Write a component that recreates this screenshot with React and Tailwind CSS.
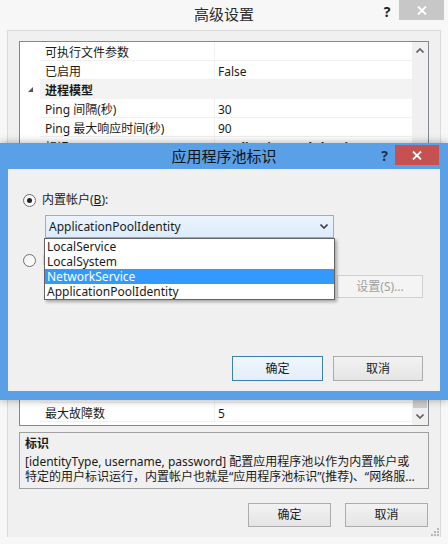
import React from 'react';

const font = "font-['Noto_Sans','Noto_Sans_CJK_SC',sans-serif]";

const rows = [
    { n: '可执行文件参数', v: '' },
    { n: '已启用', v: 'False' },
    { cat: '进程模型' },
    { n: 'Ping 间隔(秒)', v: '30' },
    { n: 'Ping 最大响应时间(秒)', v: '90' },
    { n: '标识', v: 'ApplicationPoolIdentity', bold: true },
    { n: '关闭时间限制(秒)', v: '90' },
    { n: '加载用户配置文件', v: 'True' },
    { n: '启动时间限制(秒)', v: '90' },
    { n: '启用 Ping', v: 'True' },
    { n: '空闲超时(分钟)', v: '20' },
    { n: '空闲超时操作', v: 'Terminate' },
    { n: '最大工作进程数', v: '1' },
    { cat: '快速故障防护' },
    { n: '"服务不可用"响应类型', v: 'HttpLevel' },
    { n: '故障间隔(分钟)', v: '5' },
    { n: '关闭可执行文件', v: '' },
    { n: '关闭可执行文件参数', v: '' },
    { n: '已启用', v: 'True' },
    { n: '最大故障数', v: '5' },
];

const Chevron = ({ up, className }) => (
    <svg width="8" height="5" viewBox="0 0 8 5" className={className}>
        <path d={up ? 'M0.5 4.5 L4 1 L7.5 4.5' : 'M0.5 0.5 L4 4 L7.5 0.5'} fill="none" stroke="currentColor" strokeWidth="1.6" />
    </svg>
);

const Radio = ({ checked }) => (
    <div className="w-[13px] h-[13px] rounded-full border border-[#707070] bg-gradient-to-br from-[#f0f0f0] to-white flex items-center justify-center shrink-0">
        {checked && <div className="w-[5px] h-[5px] rounded-full bg-[#222]" />}
    </div>
);

const WinButton = ({ children, className = '', focused, disabled }) => (
    <div
        className={`flex items-center justify-center border text-[12px] bg-gradient-to-b ${
            focused ? 'border-[#3c7fb1] from-[#f0f7fd] to-[#e3eef9]' : 'border-[#acacac] from-[#f2f2f2] to-[#e5e5e5]'
        } ${disabled ? 'text-[#a0a0a0] border-[#d0d0d0] from-[#f4f4f4] to-[#f4f4f4]' : 'text-[#1a1a1a]'} ${className}`}
    >
        {children}
    </div>
);

const PropRow = ({ row }) => {
    if (row.cat) {
        return (
            <div className="h-[19px] flex items-center shrink-0">
                <div className="w-[20px] h-full flex items-center justify-center">
                    <svg width="5" height="5" viewBox="0 0 5 5"><path d="M5 0 L5 5 L0 5 Z" fill="#555" /></svg>
                </div>
                <div className="flex-1 h-full bg-[#f3f3f3] flex items-center pl-[5px] pt-[3px] font-bold text-[12px] text-[#1a1a1a]">{row.cat}</div>
            </div>
        );
    }
    return (
        <div className="h-[19px] flex items-center shrink-0">
            <div className="w-[20px] h-full" />
            <div className="w-[175px] h-full flex items-center pl-[5px] pt-[3px] border-r border-b border-[#f0f0f0] text-[12px] text-[#1a1a1a] whitespace-nowrap overflow-hidden">{row.n}</div>
            <div className={`flex-1 h-full flex items-center pl-[3px] pt-[3px] border-b border-[#f0f0f0] text-[12px] text-[#1a1a1a] whitespace-nowrap overflow-hidden ${row.bold ? 'font-bold' : ''}`}>{row.v}</div>
        </div>
    );
};

export default function App() {
    return (
        <div className={`relative w-[448px] h-[544px] overflow-hidden bg-[#f7f7f7] ${font}`}>
            {/* outer title bar */}
            <div className="h-[30px] flex items-start">
                <div className="w-[73px]" />
                <div className="flex-1 h-[28px] flex items-center justify-center text-[15px] text-[#2b2b2b]">高级设置</div>
                <div className="w-[73px] flex items-start">
                    <div className="w-[24px] h-[22px] flex items-center justify-center text-[14px] font-bold text-[#222]">?</div>
                    <div className="w-[45px] h-[20px] bg-[#c7c7c7] flex items-center justify-center">
                        <svg width="10" height="9" viewBox="0 0 10 9"><path d="M1 0.5 L9 8.5 M9 0.5 L1 8.5" stroke="white" strokeWidth="1.8" /></svg>
                    </div>
                </div>
            </div>

            {/* outer client */}
            <div className="mx-[7px] h-[507px] border border-b-0 border-[#dadada] bg-[#f0f0f0] flex flex-col px-[11px] pt-[10px] relative">
                {/* property grid */}
                <div className="h-[385px] border border-[#828790] bg-white flex overflow-hidden shrink-0">
                    <div className="flex-1 flex flex-col overflow-hidden">
                        {rows.map((r, i) => <PropRow key={i} row={r} />)}
                    </div>
                    <div className="w-[16px] bg-[#f0f0f0] flex flex-col">
                        <div className="h-[17px] flex items-center justify-center text-[#606060]"><Chevron up /></div>
                        <div className="flex-1 flex flex-col justify-end px-[1px]">
                            <div className="h-[70px] bg-[#cdcdcd]" />
                        </div>
                        <div className="h-[17px] flex items-center justify-center text-[#606060]"><Chevron /></div>
                    </div>
                </div>

                {/* description */}
                <div className="mt-[6px] h-[57px] border border-[#a0a0a0] bg-[#f0f0f0] px-[5px] pt-[2px] flex flex-col text-[#1a1a1a] shrink-0">
                    <div className="h-[17px] leading-[17px] text-[12px] font-bold">标识</div>
                    <div className="mt-[2px] h-[15px] leading-[15px] text-[12px] whitespace-nowrap">[identityType, username, password] 配置应用程序池以作为内置帐户或</div>
                    <div className="h-[15px] leading-[15px] text-[12px] whitespace-nowrap overflow-hidden text-ellipsis">特定的用户标识运行，内置帐户也就是“应用程序池标识”(推荐)、“网络服务”、“本地系统”或“本地服务”。</div>
                </div>

                {/* bottom buttons */}
                <div className="mt-[14px] flex justify-end gap-[14px] pr-[1px]">
                    <WinButton className="w-[83px] h-[24px]">确定</WinButton>
                    <WinButton className="w-[83px] h-[24px]">取消</WinButton>
                </div>

                {/* resize grip */}
                <div className="mt-auto mb-[1px] flex justify-end -mr-[10px]">
                    <svg width="9" height="9" viewBox="0 0 9 9">
                        <rect x="7" y="1" width="2" height="2" fill="#b8b8b8" />
                        <rect x="4" y="4" width="2" height="2" fill="#b8b8b8" />
                        <rect x="7" y="4" width="2" height="2" fill="#b8b8b8" />
                        <rect x="1" y="7" width="2" height="2" fill="#b8b8b8" />
                        <rect x="4" y="7" width="2" height="2" fill="#b8b8b8" />
                        <rect x="7" y="7" width="2" height="2" fill="#b8b8b8" />
                    </svg>
                </div>
            </div>

            {/* inner dialog: 应用程序池标识 */}
            <div className="absolute left-0 top-[143px] w-[448px] h-[257px] bg-[#5aa0e6] flex flex-col shadow-[0_0_8px_rgba(0,0,0,0.35)]">
                <div className="h-[26px] flex items-start">
                    <div className="w-[74px]" />
                    <div className="flex-1 h-[26px] flex items-center justify-center text-[15px] text-[#111]">应用程序池标识</div>
                    <div className="w-[74px] flex items-start pt-[2px]">
                        <div className="w-[21px] h-[20px] flex items-center justify-center text-[14px] font-bold text-[#1f2f4f]">?</div>
                        <div className="w-[44px] h-[20px] bg-[#c75050] flex items-center justify-center">
                            <svg width="10" height="9" viewBox="0 0 10 9"><path d="M1 0.5 L9 8.5 M9 0.5 L1 8.5" stroke="white" strokeWidth="1.8" /></svg>
                        </div>
                    </div>
                </div>

                <div className="mx-[8px] h-[222px] bg-[#f0f0f0] relative flex flex-col pt-[23px] text-[#1a1a1a]">
                    <div className="h-[16px] flex items-center pl-[15px] gap-[6px] text-[12px]">
                        <Radio checked />
                        <span>内置帐户(<span className="underline">B</span>):</span>
                    </div>

                    <div className="mt-[7px] ml-[37px] w-[289px] h-[23px] border border-[#7eb4ea] bg-gradient-to-b from-[#ecf4fc] to-[#dcecfc] flex items-center pl-[3px] pr-[5px] text-[12px]">
                        <span className="flex-1">ApplicationPoolIdentity</span>
                        <Chevron className="text-[#404040]" />
                    </div>

                    <div className="mt-[14px] h-[16px] flex items-center pl-[15px] gap-[6px] text-[12px]">
                        <Radio />
                        <span>自定义帐户(<span className="underline">C</span>):</span>
                    </div>

                    <div className="mt-[7px] flex items-center gap-[8px] pl-[37px]">
                        <div className="w-[284px] h-[23px] border border-[#d9d9d9] bg-[#f0f0f0]" />
                        <WinButton disabled className="w-[86px] h-[23px]">设置(S)...</WinButton>
                    </div>

                    <div className="mt-auto pb-[10px] pr-[17px] flex justify-end gap-[10px]">
                        <WinButton focused className="w-[91px] h-[25px]">确定</WinButton>
                        <WinButton className="w-[90px] h-[25px]">取消</WinButton>
                    </div>

                    {/* open dropdown list */}
                    <div className="absolute left-[36px] top-[69px] w-[291px] h-[62px] border border-[#646464] bg-white shadow-[2px_2px_3px_rgba(0,0,0,0.3)] flex flex-col text-[12px]">
                        <div className="h-[15px] leading-[15px] pl-[2px]">LocalService</div>
                        <div className="h-[15px] leading-[15px] pl-[2px]">LocalSystem</div>
                        <div className="h-[15px] leading-[15px] pl-[2px] bg-[#3399ff] text-white">NetworkService</div>
                        <div className="h-[15px] leading-[15px] pl-[2px]">ApplicationPoolIdentity</div>
                    </div>
                </div>
            </div>
        </div>
    );
}
